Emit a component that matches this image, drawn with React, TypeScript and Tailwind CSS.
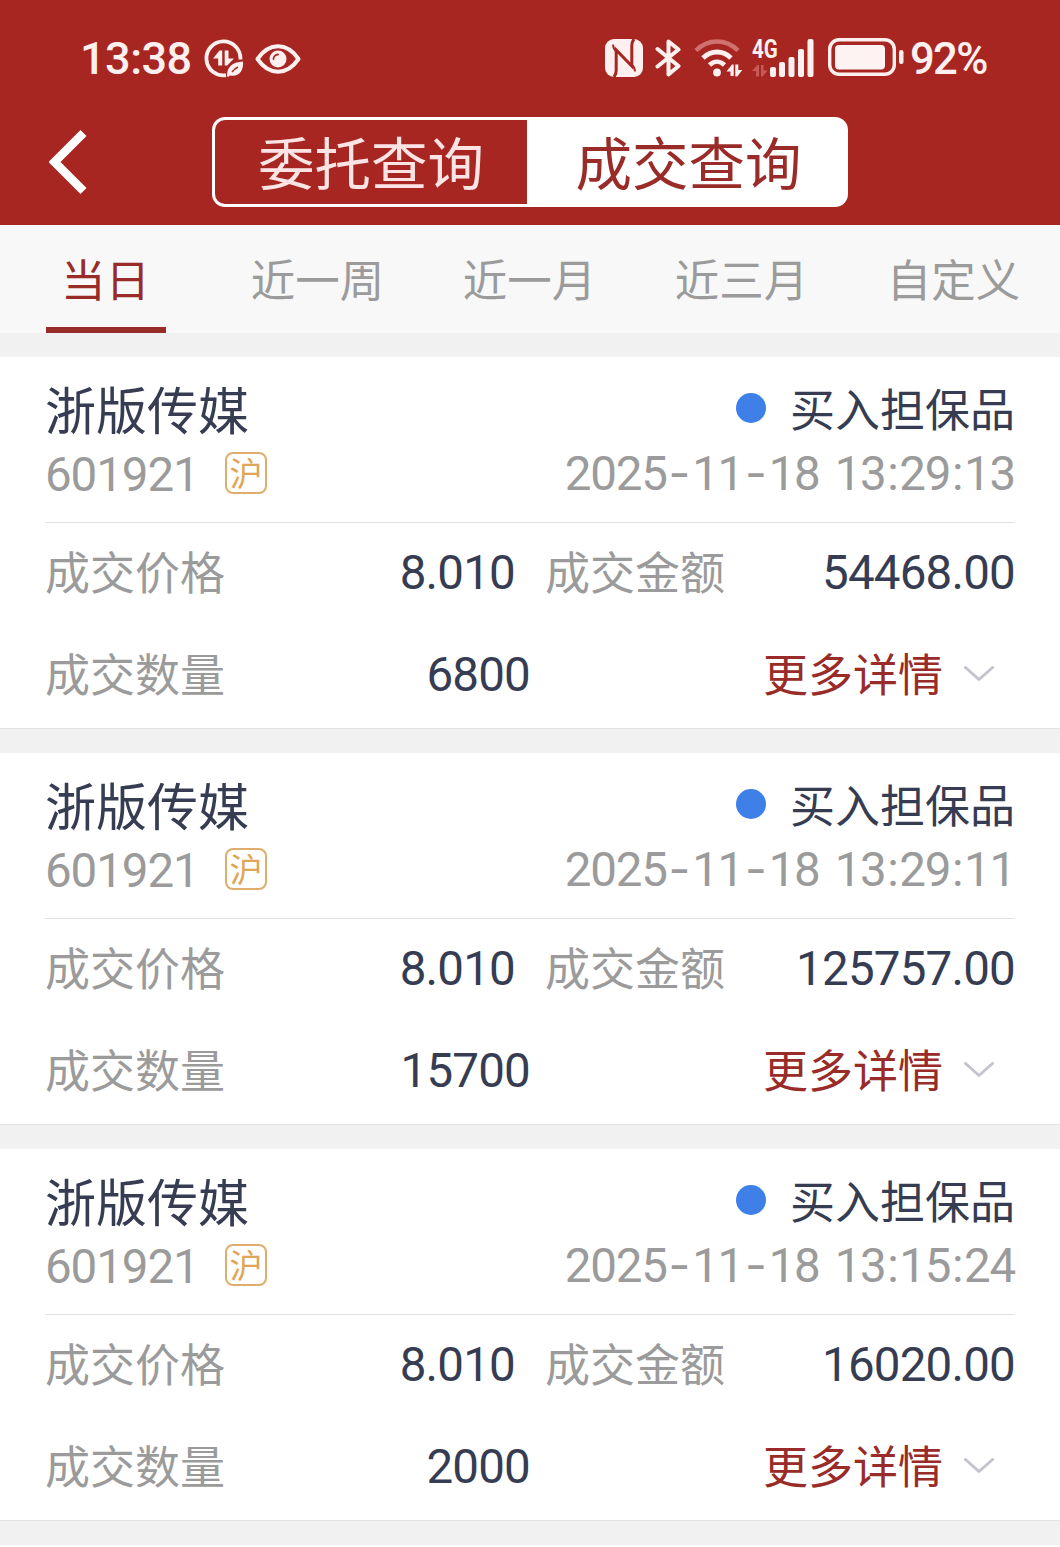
const trades = [
    { id: 1, name: "浙版传媒", code: "601921", market: "沪", side: "买入担保品", date: "2025-11-18", time: "13:29:13", price: "8.010", amount: "54468.00", count: "6800" },
    { id: 2, name: "浙版传媒", code: "601921", market: "沪", side: "买入担保品", date: "2025-11-18", time: "13:29:11", price: "8.010", amount: "125757.00", count: "15700" },
    { id: 3, name: "浙版传媒", code: "601921", market: "沪", side: "买入担保品", date: "2025-11-18", time: "13:15:24", price: "8.010", amount: "16020.00", count: "2000" },
]

const tabs = ["当日", "近一周", "近一月", "近三月", "自定义"]

function DataSaverIcon(){
    return(
        <svg width="40" height="40" viewBox="0 0 40 40" className="mt-px ml-[13px]" fill="none">
            <path d="M36.400 20.500A17 17 0 1 0 22 36.200" stroke="#fdf0ef" strokeWidth="3.800" />
            <path d="M9 19.500l6.500-8h2.700V26.500h-4v-7zM20.700 11.500h3.800v8h5.500L23.200 26.500h-2.500z" fill="#fdf0ef" />
            <path d="M39 22.500c.8 9.500-4 15.500-13 14L24 38l-1-1c-.3-8.500 5-14 16-14.500z" fill="#fdf0ef" />
            <path d="M28 33c1.500-2 3.500-3.800 6-5" stroke="#a72622" strokeWidth="1.400" />
        </svg>
    )
}

function EyeIcon(){
    return(
        <svg width="46" height="32" viewBox="0 0 46 32" className="mt-[5px] ml-[11px]" fill="none">
            <path d="M2.500 16C8 8 15 3.300 23 3.300S38 8 43.500 16C38 24 31 28.700 23 28.700S8 24 2.500 16z" stroke="#fdf0ef" strokeWidth="4" strokeLinejoin="round" />
            <circle cx="23" cy="16" r="8.500" fill="#fdf0ef" />
            <path d="M18.500 16a4.500 4.500 0 0 1 4.500-4.500" stroke="#a72622" strokeWidth="1.800" strokeLinecap="round" />
        </svg>
    )
}

function NfcIcon(){
    return(
        <svg width="38" height="38" viewBox="0 0 38 38" className="mt-px" fill="none">
            <rect width="38" height="38" rx="9" fill="#fdf0ef" />
            <path d="M9 38c1.500-2 2.200-3.500 2.200-6.500V11L26.800 27V6.500c0-3 .7-4.500 2.200-6.500" stroke="#a72622" strokeWidth="3" />
            <path d="M11.200 12.500C9 10.500 8 8.500 8 5.500M26.800 25.500C29 27.500 30 29.500 30 32.500" stroke="#a72622" strokeWidth="1.800" />
        </svg>
    )
}

function BluetoothIcon(){
    return(
        <svg width="28" height="38" viewBox="0 0 28 38" className="mt-px ml-3" fill="none">
            <path d="M2.500 10L23.500 27L13.500 35.500V2.500L23.500 10.500L2.500 27.500" stroke="#fdf0ef" strokeWidth="4" strokeLinecap="round" strokeLinejoin="round" />
        </svg>
    )
}

function WifiIcon(){
    return(
        <svg width="49" height="39" viewBox="0 0 49 39" className="ml-[11px]" fill="none">
            <path d="M2 12.500C14 .5 32 .5 44 12.500" stroke="#cf716f" strokeWidth="4.500" />
            <path d="M9 20c8-8 20-8 28 0" stroke="#fdf0ef" strokeWidth="4.800" />
            <path d="M15.500 27c4.500-4.300 10.500-4.300 15 0" stroke="#fdf0ef" strokeWidth="4.600" />
            <circle cx="23" cy="34.500" r="3.900" fill="#fdf0ef" />
            <path d="M32.500 33.500l5.500-7h1.700v11.500h-3.200v-4.500zM41.300 26.500h3v5.500h4l-5 6.500h-2z" fill="#fdf0ef" />
        </svg>
    )
}

function SignalIcon(){
    return(
        <div className="relative ml-[9px]">
            <span className="absolute left-0 top-0 text-[25px] leading-[24px] font-bold origin-left scale-x-[.82]">4G</span>
            <svg width="62" height="40" viewBox="0 -1 62 40">
                <path d="M0 32l5.500-6H7v11.500H4V32zM9 26h2.500v5.500h4l-5 6H9z" fill="#c65a57" />
                <rect x="18" y="28" width="6" height="10" rx="2" fill="#fdf0ef" />
                <rect x="27" y="23" width="6" height="15" rx="2" fill="#fdf0ef" />
                <rect x="36.500" y="18" width="6" height="20" rx="2" fill="#fdf0ef" />
                <rect x="46" y="10" width="6" height="28" rx="2" fill="#fdf0ef" />
                <rect x="55.500" y="0" width="6" height="38" rx="2" fill="#fdf0ef" />
            </svg>
        </div>
    )
}

function BatteryIcon(){
    return(
        <svg width="76" height="38" viewBox="0 0 76 38" className="ml-[14px]" fill="none">
            <rect x="1.700" y="1.700" width="64.600" height="34.600" rx="9.500" stroke="#fdf0ef" strokeWidth="3.400" />
            <rect x="7" y="7" width="50" height="24.500" rx="4" fill="#fdf3f2" />
            <rect x="71" y="12" width="4.500" height="14" rx="2.200" fill="#fdf0ef" />
        </svg>
    )
}

function StatusBar(){
    return(
        <div className="flex items-start h-[117px] pt-[38px] pl-20 pr-[72px] text-[#fdf0ef] font-['Roboto',sans-serif] text-[45px] leading-[42px] font-medium">
            <span className="w-[111px] tracking-[-0.5px]">13:38</span>
            <DataSaverIcon />
            <EyeIcon />
            <div className="flex ml-auto">
                <NfcIcon />
                <BluetoothIcon />
                <WifiIcon />
                <SignalIcon />
                <BatteryIcon />
                <span className="ml-1.5 w-[78px] tracking-[-1.8px] origin-left scale-x-[.97]">92%</span>
            </div>
        </div>
    )
}

function Header(){
    return(
        <header className="h-[225px] bg-[#a72622]">
            <StatusBar />
            <div className="flex h-[90px]">
                <svg width="38" height="64" viewBox="0 0 38 64" className="mt-[13px] ml-[49px]" fill="none">
                    <path d="M34.500 3L5.500 32L34.500 61" stroke="#ffffff" strokeWidth="8.500" />
                </svg>
                <div className="flex ml-[125px] p-[3px] w-[636px] rounded-[13px] bg-white text-[56.5px] leading-[80px]">
                    <button className="h-[84px] w-[312px] pb-1 rounded-l-[10px] bg-[#a72622] text-[#fbe4e3]">委托查询</button>
                    <button className="h-[84px] flex-1 pb-1 pl-[5px] text-[#992b28]">成交查询</button>
                </div>
            </div>
        </header>
    )
}

function Tabs(){
    return(
        <nav className="grid grid-cols-5 h-[108px] bg-[#f8f8f8] text-[44.5px] leading-[106px] text-[#9b9b9b]">
            {tabs.map((tab, i) => (
                <div key={tab} className={i === 0 ? "flex flex-col items-center text-[#992b28]" : "flex flex-col items-center"}>
                    <span className="h-[102px] pr-px">{tab}</span>
                    {i === 0 && <div className="h-1.5 w-[120px] bg-[#992b28]" />}
                </div>
            ))}
        </nav>
    )
}

function DateTime(props: { date: string, time: string }){
    return(
        <span className="flex items-baseline font-['Roboto',sans-serif] text-[47.5px] tracking-[-1.2px]">
            {props.date.split("-").map((part, i) => (
                <span key={i}>
                    {i > 0 && <span className="inline-block w-[25.5px] text-center font-['Inter',sans-serif] leading-none tracking-normal">-</span>}
                    {part}
                </span>
            ))}
            <span className="ml-[15px]">
                {props.time.split(":").map((part, i) => (
                    <span key={i}>
                        {i > 0 && <span className="px-[1.7px]">:</span>}
                        {part}
                    </span>
                ))}
            </span>
        </span>
    )
}

function TradeCard(props: { trade: typeof trades[number] }){
    const { trade } = props
    const num = "font-['Roboto',sans-serif] text-[47.5px] tracking-[-0.8px] pt-px"

    return(
        <section className="h-[372px] bg-white border-b border-[#e2e2e2] px-[45px] pt-[21px] text-[#363c52]">
            <div className="flex items-center justify-between h-[60px]">
                <h2 className="text-[51px]">{trade.name}</h2>
                <div className="flex items-center">
                    <div className="size-[30px] rounded-full bg-[#3f7fe8] mr-6" />
                    <span className="text-[45px]">{trade.side}</span>
                </div>
            </div>
            <div className="flex items-center justify-between h-12 mt-[13px] text-[#9b9b9b]">
                <div className="flex items-center">
                    <span className="font-['Roboto',sans-serif] text-[47.5px] tracking-[-1.1px] w-[180px] pt-px">{trade.code}</span>
                    <span className="size-[42px] mb-1 rounded-[8px] border-2 border-[#dfae6c] text-center text-[33px] leading-[36px] text-[#dfa558]">{trade.market}</span>
                </div>
                <DateTime date={trade.date} time={trade.time} />
            </div>
            <div className="h-px mt-[23px] bg-[#e2e2e2]" />

            <div className="grid grid-cols-2 gap-y-[52px] mt-6 text-[45px] leading-[50px]">
                <div className="flex items-center justify-between h-[50px] pr-[15px]">
                    <span className="pb-[3px] text-[#9b9b9b]">成交价格</span>
                    <span className={num}>{trade.price}</span>
                </div>
                <div className="flex items-center justify-between h-[50px] pl-[15px]">
                    <span className="pb-[3px] text-[#9b9b9b]">成交金额</span>
                    <span className={num}>{trade.amount}</span>
                </div>
                <div className="flex items-center justify-between h-[50px]">
                    <span className="pb-[3px] text-[#9b9b9b]">成交数量</span>
                    <span className={num}>{trade.count}</span>
                </div>
                <button className="flex items-center justify-end h-[50px] pr-[21px] text-[#992b28]">
                    <span className="pb-[3px]">更多详情</span>
                    <svg width="30" height="16" viewBox="0 0 30 16" className="ml-[21px]" fill="none">
                        <path d="M1.500 1.500L15 13.500L28.500 1.500" stroke="#c3c4cc" strokeWidth="3" strokeLinecap="round" strokeLinejoin="round" />
                    </svg>
                </button>
            </div>
        </section>
    )
}

export default function App(){
    return(
        <div className="w-[1060px] h-[1547px] overflow-hidden bg-white font-['Noto_Sans_CJK_SC',sans-serif]">
            <Header />
            <Tabs />
            <main className="flex flex-col gap-6 h-[1212px] pt-6 bg-[#f1f1f1]">
                {trades.map((trade) => (
                    <TradeCard key={trade.id} trade={trade} />
                ))}
            </main>
        </div>
    )
}
